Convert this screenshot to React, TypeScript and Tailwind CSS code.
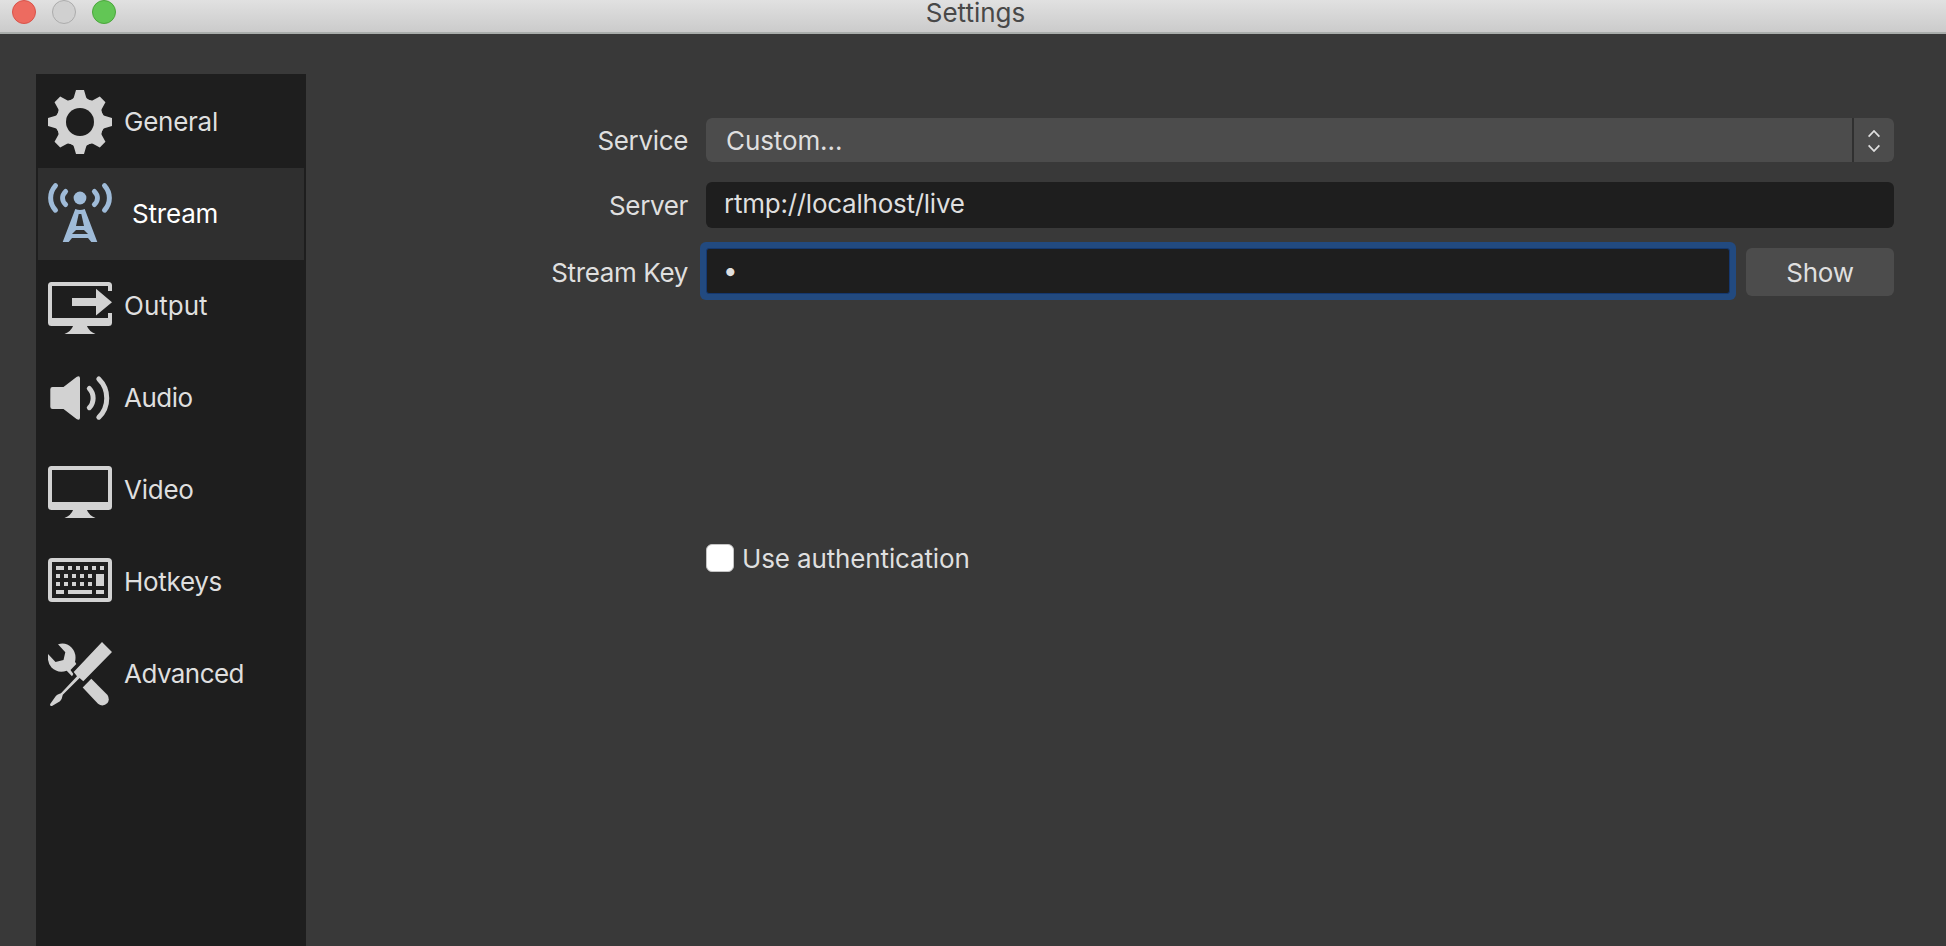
import type { ReactNode } from "react";

const GEAR_ANGLES = [0, 45, 90, 135, 180, 225, 270, 315];

function Icon({ children }: { children: ReactNode }) {
  return (
    <svg viewBox="0 0 64 64" className="size-16 shrink-0" fill="currentColor">
      {children}
    </svg>
  );
}

function GearIcon() {
  return (
    <Icon>
      {GEAR_ANGLES.map((angle) => (
        <path
          key={angle}
          transform={`rotate(${angle} 32 32)`}
          d="M28 0H36L38.2 7.6Q38.8 9.3 43.7 11L33 33H31L20.3 11Q25.2 9.3 25.8 7.6Z"
        />
      ))}
      <circle cx="32" cy="32" r="14" fill="#1e1e1e" />
    </Icon>
  );
}

function AntennaIcon() {
  return (
    <Icon>
      <circle cx="32" cy="16" r="6.4" />
      <g fill="none" stroke="currentColor" strokeWidth="5" strokeLinecap="round">
        <path d="M7.5 3.7C1 11 1 21 7.5 28.2M56.5 3.7C63 11 63 21 56.5 28.2" />
        <path d="M17.6 9.4C13.6 13.4 13.6 18.6 17.6 22.6M46.4 9.4C50.4 13.4 50.4 18.6 46.4 22.6" />
      </g>
      <path
        fillRule="evenodd"
        d="M27.3 27Q32 29 36.7 27L49.3 60H43.3L40 56H24L20.7 60H14.7ZM30.7 32L28 44H36L33.3 32ZM28 48L24 52H40L36 48Z"
      />
    </Icon>
  );
}

function MonitorStand() {
  return <path d="M25.3 51.5H38.7Q41 57.5 47.5 60H16.5Q23 57.5 25.3 51.5Z" />;
}

function OutputIcon() {
  return (
    <Icon>
      <path d="M3.5 8H60.5Q64 8 64 11.5V17H60V12H4V44H60V39H64V48.5Q64 52 60.5 52H3.5Q0 52 0 48.5V11.5Q0 8 3.5 8Z" />
      <path d="M24 24H48V14.8L64 28.2L48 41.6V32H24Z" />
      <MonitorStand />
    </Icon>
  );
}

function SpeakerIcon() {
  return (
    <Icon>
      <path d="M4.5 21H15.5L28.5 11Q32 9 32 12.5V51.5Q32 55 28.5 53L15.5 43H4.5Q2.3 43 2.3 40.8V23.2Q2.3 21 4.5 21Z" />
      <g fill="none" stroke="currentColor" strokeWidth="5" strokeLinecap="round">
        <path d="M41.3 22.5C46.4 27.8 46.4 36.5 41.3 41.7" />
        <path d="M50.8 13C61.4 23.5 61.4 40.8 50.8 51.2" />
      </g>
    </Icon>
  );
}

function MonitorIcon() {
  return (
    <Icon>
      <path
        fillRule="evenodd"
        d="M3.5 8H60.5Q64 8 64 11.5V48.5Q64 52 60.5 52H3.5Q0 52 0 48.5V11.5Q0 8 3.5 8ZM4 12V44H60V12Z"
      />
      <MonitorStand />
    </Icon>
  );
}

function KeyboardIcon() {
  return (
    <Icon>
      <rect x="2" y="10" width="60" height="40" rx="2" fill="none" stroke="currentColor" strokeWidth="4" />
      <path d="M8 16h8v4h-8zM20 16h4v4h-4zM28 16h4v4h-4zM36 16h4v4h-4zM44 16h4v4h-4zM52 16h4v4h-4z" />
      <path d="M8 24h4v4h-4zM16 24h4v4h-4zM24 24h4v4h-4zM32 24h4v4h-4zM40 24h4v4h-4zM48 24h8v12h-8z" />
      <path d="M8 32h4v4h-4zM16 32h4v4h-4zM24 32h4v4h-4zM32 32h4v4h-4zM40 32h4v4h-4z" />
      <path d="M8 40h8v4h-8zM20 40h24v4h-24zM48 40h8v4h-8z" />
    </Icon>
  );
}

function ToolsIcon() {
  return (
    <Icon>
      <path d="M54 0L64 10L35.3 39.3L31.6 35.9L14.8 52.8Q14 57.5 12 59.3L4 64Q1.5 64 2.2 62L7.3 54.7Q8.5 52.5 13 51.2L29 34.2L25.7 30Z" />
      <path d="M43.3 36.7L59.5 53Q62 57.5 59.5 61Q55 65.5 50 61.8L34.7 45.5Z" />
      <path d="M10 2.3Q18 0 23.5 5.5Q29 11.5 27 19.8L28.3 22L22.5 28L25.3 32L24 34.2L18.7 28.8Q9.5 31.5 3.5 25.5Q-1 20.5 0 12L7.5 20L15.5 18L17.3 10.3Z" />
    </Icon>
  );
}

const items = [
  { label: "General", icon: <GearIcon />, tracking: "tracking-[-0.25px]" },
  { label: "Stream", icon: <AntennaIcon />, tracking: "tracking-[-0.2px]", active: true },
  { label: "Output", icon: <OutputIcon />, tracking: "tracking-normal" },
  { label: "Audio", icon: <SpeakerIcon />, tracking: "tracking-[-0.5px]" },
  { label: "Video", icon: <MonitorIcon />, tracking: "tracking-[-0.25px]" },
  { label: "Hotkeys", icon: <KeyboardIcon />, tracking: "tracking-[-0.3px]" },
  { label: "Advanced", icon: <ToolsIcon />, tracking: "tracking-[-0.55px]" },
];

function Sidebar() {
  return (
    <nav className="mt-10 ml-9 flex w-[270px] shrink-0 flex-col bg-[#1e1e1e] p-0.5">
      {items.map(({ label, icon, tracking, active }) =>
        active ? (
          <div key={label} className="flex h-[92px] items-center gap-5 bg-[#2f2f2f] pl-2.5 text-[#9fbbd8]">
            {icon}
            <span className={`text-white ${tracking}`}>{label}</span>
          </div>
        ) : (
          <div key={label} className="flex h-[92px] items-center gap-3 pl-2.5 text-[#d2d2d2]">
            {icon}
            <span className={`text-[#dfdfdf] ${tracking}`}>{label}</span>
          </div>
        ),
      )}
    </nav>
  );
}

function Label({ children }: { children: ReactNode }) {
  return <div className="w-[400px] shrink-0 pt-0.5 pr-[18px] text-right tracking-[-0.35px]">{children}</div>;
}

export default function App() {
  return (
    <div className="flex h-[946px] w-[1946px] flex-col overflow-hidden bg-[#393939] font-['Inter',sans-serif] text-[26px] leading-8 text-[#dfdfdf]">
      <header className="flex h-[34px] shrink-0 items-start border-b-2 border-[#a9adab] bg-linear-to-b from-[#e1e1e1] to-[#cbcbcb]">
        <div className="flex w-[300px] gap-4 pl-3">
          <span className="size-6 rounded-full border border-[#d9534a] bg-[#ed6b60]" />
          <span className="size-6 rounded-full border border-[#acacac] bg-[#d0d0d0]" />
          <span className="size-6 rounded-full border border-[#4ba63c] bg-[#62c655]" />
        </div>
        <h1 className="w-[1351px] text-center leading-[26px] text-[#484848]">Settings</h1>
      </header>
      <div className="flex min-h-0 flex-1">
        <Sidebar />
        <main className="flex flex-1 flex-col pt-[84px] pr-[52px]">
          <div className="flex h-11 items-center">
            <Label>Service</Label>
            <div className="flex h-11 flex-1 gap-0.5 overflow-hidden rounded-md bg-[#303030]">
              <div className="flex flex-1 items-center bg-[#4c4c4c] pt-0.5 pl-5 tracking-[-0.1px]">Custom...</div>
              <div className="flex w-10 items-center justify-center bg-[#4c4c4c] pt-0.5">
                <svg viewBox="0 0 12 24" className="h-6 w-3" fill="none" stroke="#dfdfdf" strokeWidth="1.8">
                  <path d="M0.6 7.6L6 2L11.4 7.6M0.6 16.4L6 22L11.4 16.4" />
                </svg>
              </div>
            </div>
          </div>
          <div className="mt-5 flex h-[46px] items-center">
            <Label>Server</Label>
            <div className="flex h-full flex-1 items-center rounded-md bg-[#1e1e1e] pb-0.5 pl-[18px] tracking-[-0.25px]">
              rtmp://localhost/live
            </div>
          </div>
          <div className="mt-5 flex h-12 items-center">
            <Label>Stream Key</Label>
            <div className="-mx-1.5 mb-0.5 w-[1036px] shrink-0 rounded-md bg-[#224a80] p-1.5">
              <div className="flex h-[46px] items-center rounded-[3px] border border-[#15386f] bg-[#1e1e1e] pl-4">•</div>
            </div>
            <button className="ml-4 h-12 w-[148px] rounded-md bg-[#4c4c4c] pt-0.5 tracking-[-0.2px]">Show</button>
          </div>
          <label className="mt-[246px] ml-[400px] flex h-8 items-center gap-2">
            <span className="size-7 rounded-md border border-[#c4c4c4] bg-white" />
            <span className="pt-0.5 tracking-[-0.14px]">Use authentication</span>
          </label>
        </main>
      </div>
    </div>
  );
}
